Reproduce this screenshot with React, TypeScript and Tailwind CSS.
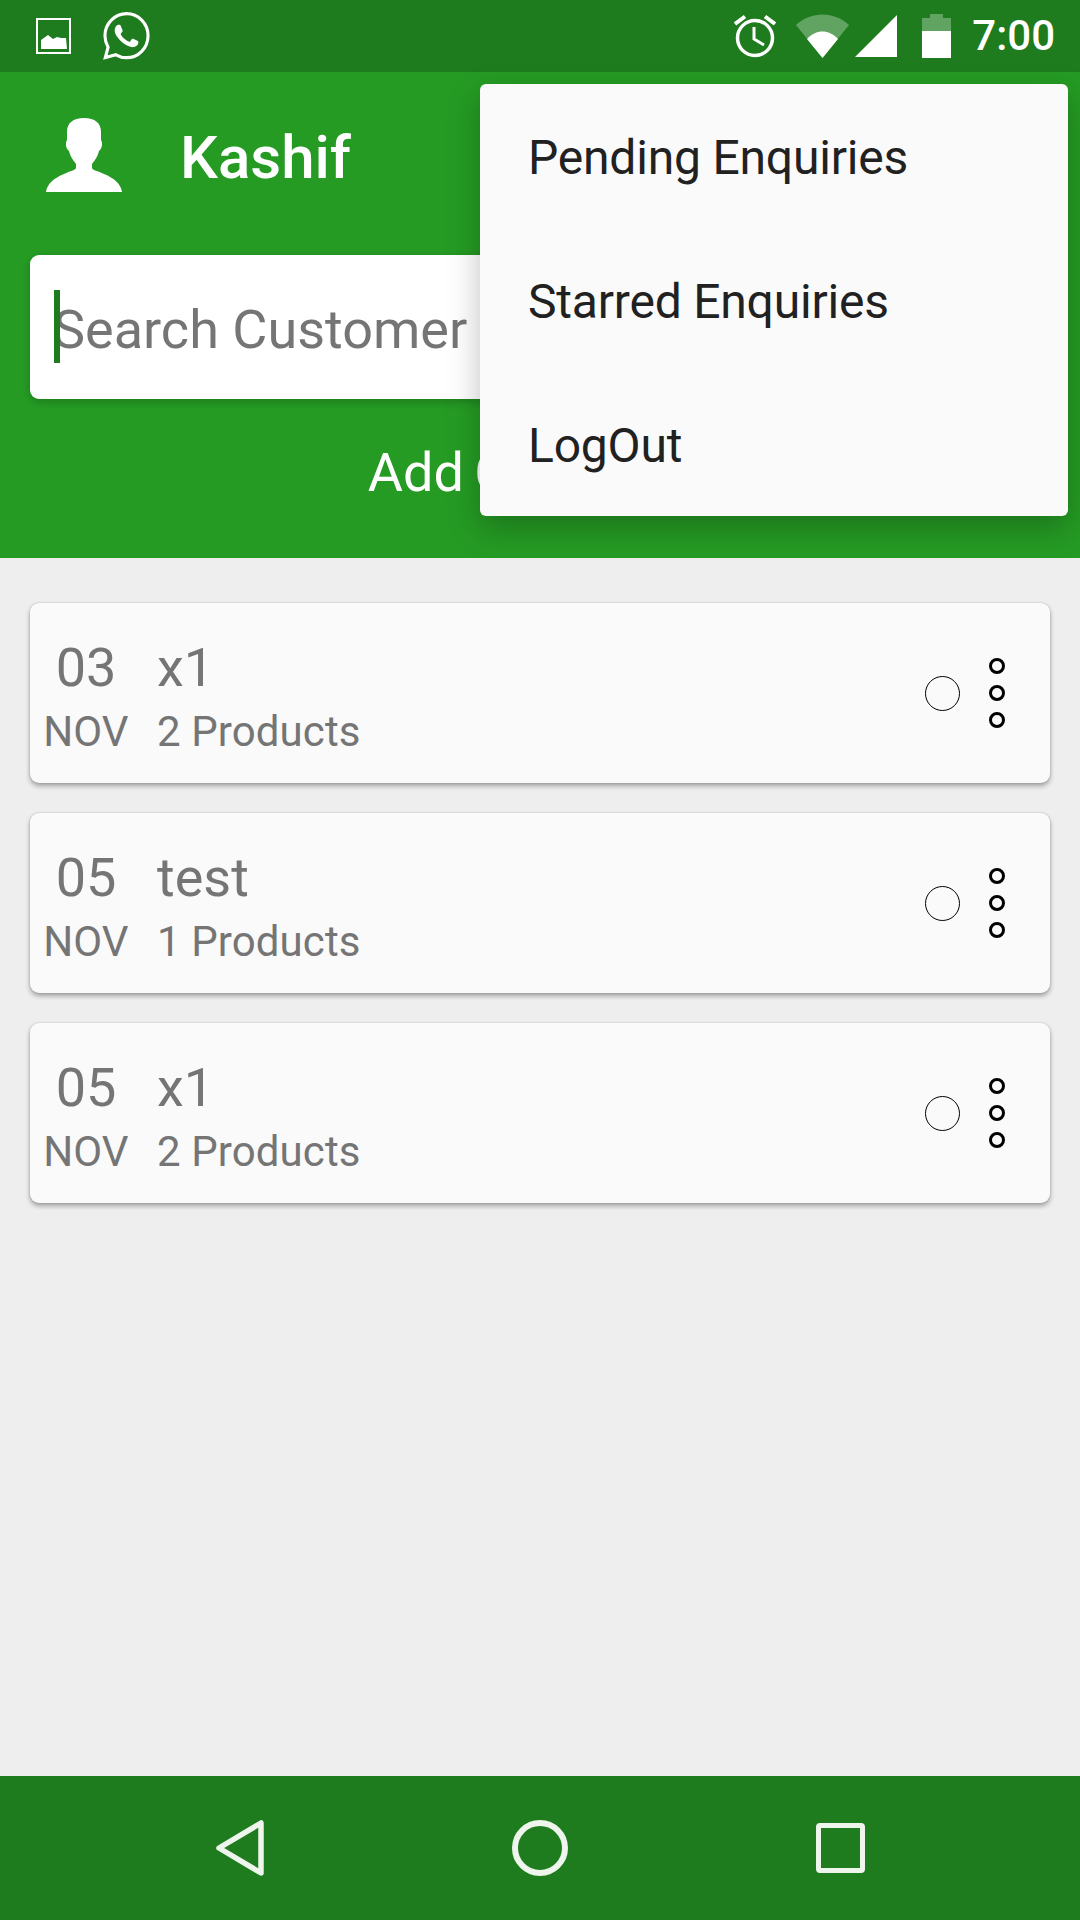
const roboto = "font-['Roboto',sans-serif]";

const enquiries = [
  { day: "03", name: "x1", products: "2 Products" },
  { day: "05", name: "test", products: "1 Products" },
  { day: "05", name: "x1", products: "2 Products" },
];

const menuItems = ["Pending Enquiries", "Starred Enquiries", "LogOut"];

const StatusBar = () => (
  <div className="flex h-[72px] shrink-0 items-center bg-[#1e7b1e] text-white">
    <svg width="36" height="36" viewBox="0 0 36 36" className="ml-[36px]" fill="none">
      <rect x="1" y="1" width="33" height="34" stroke="white" strokeWidth="2" />
      <path d="M5 22 L12 17 L17 21 L21 19 L25 20 L30 20 L31 31 L5 31 Z" fill="white" />
    </svg>
    <svg width="47" height="48" viewBox="0 0 24 24" className="ml-[31px]" fill="white" preserveAspectRatio="none">
      <path d="M17.47 14.38c-.3-.15-1.76-.87-2.03-.97-.27-.1-.47-.15-.67.15-.2.3-.77.97-.94 1.16-.17.2-.35.22-.65.07-.3-.15-1.26-.46-2.4-1.48-.89-.79-1.49-1.77-1.66-2.07-.17-.3-.02-.46.13-.61.13-.13.3-.35.45-.52.15-.17.2-.3.3-.5.1-.2.05-.37-.03-.52-.07-.15-.67-1.61-.92-2.21-.24-.58-.49-.5-.67-.51h-.57c-.2 0-.52.07-.79.37-.27.3-1.04 1.02-1.04 2.48s1.07 2.88 1.21 3.07c.15.2 2.1 3.2 5.08 4.49.71.31 1.26.49 1.69.63.71.23 1.36.19 1.87.12.57-.09 1.76-.72 2.01-1.41.25-.7.25-1.29.17-1.41-.07-.13-.27-.2-.57-.35z" />
      <path d="M12.05.85C6 .85 1 5.8 1 11.9c0 2.1.6 4 1.6 5.7L1.2 22.8l5.4-1.4a11 11 0 0 0 5.45 1.45c6 0 10.95-4.9 10.95-11C23 5.8 18.05.85 12.05.85Z" fill="none" stroke="white" strokeWidth="1.6" />
    </svg>
    <svg width="42" height="44" viewBox="0 0 42 44" className="ml-auto" fill="none" stroke="white">
      <circle cx="21" cy="24" r="17.5" strokeWidth="3.5" />
      <path d="M20 13 V25 L30 31" strokeWidth="3" />
      <path d="M1 10 L11 2.5 M41 10 L31 2.5" strokeWidth="4" />
    </svg>
    <svg width="53" height="44" viewBox="0 0 53 44" className="ml-[20px]">
      <path d="M0 11 C15 -3 38 -3 53 11 L26.5 44 Z" fill="white" fillOpacity="0.3" />
      <path d="M11 25 C20 15 33 15 42 25 L26.5 44 Z" fill="white" />
    </svg>
    <svg width="42" height="42" viewBox="0 0 42 42" className="ml-[6px]">
      <path d="M0 42 L42 0 V42 Z" fill="white" />
    </svg>
    <svg width="29" height="44" viewBox="0 0 29 44" className="ml-[25px]">
      <path d="M8 0 H21 V4 H29 V17 H0 V4 H8 Z" fill="white" fillOpacity="0.3" />
      <rect x="0" y="17" width="29" height="27" fill="white" />
    </svg>
    <span className="ml-[21px] mr-[25px] text-[42px] font-medium leading-none">7:00</span>
  </div>
);

const AppHeader = () => (
  <header className="h-[486px] shrink-0 bg-[#259b24] text-white">
    <div className="flex h-[183px] items-center">
      <svg width="76" height="74" viewBox="46 119 76 74" className="ml-[46px] mt-[-18px]" fill="white">
        <path d="M84 119 C73 119 67 124 67 133 L67 141 C65 144 66 150 69 152 C70 157 73 161 76 165 L76 169 C76 171 70 172 64 175 C54 179 47 185 46 193 L122 193 C121 185 114 179 104 175 C98 172 92 171 92 169 L92 165 C95 161 98 157 99 152 C102 150 103 144 101 141 L101 133 C101 124 95 119 84 119 Z" />
      </svg>
      <span className="ml-[58px] mt-[-12px] text-[60px] font-medium leading-none">Kashif</span>
    </div>
    <div className="relative mx-[30px] flex h-[144px] items-center rounded-[9px] bg-white pl-[23px] pt-[5px] shadow-[0_3px_8px_rgba(0,0,0,0.2)]">
      <span className="absolute left-[24px] top-[35px] h-[73px] w-[6px] bg-[#1e7b1e]" />
      <span className="text-[54px] leading-none text-[#757575]">Search Customer</span>
    </div>
    <div className="mt-[47px] pr-[3px] text-center text-[54px] leading-none [word-spacing:-3px]">Add Customer</div>
  </header>
);

const EnquiryCard = ({ day, name, products }: { day: string; name: string; products: string }) => (
  <div className="flex h-[180px] items-center rounded-[9px] bg-[#fafafa] text-[#757575] shadow-[0_3px_5px_rgba(0,0,0,0.32),0_0_2px_rgba(0,0,0,0.2)]">
    <div className="ml-[13px] w-[86px] pt-[7px] text-center">
      <div className="text-[54px] leading-[64px]">{day}</div>
      <div className="mt-[7px] text-[42px] leading-[50px] tracking-[0.1px]">NOV</div>
    </div>
    <div className="ml-[28px] pt-[7px]">
      <div className="text-[54px] leading-[64px]">{name}</div>
      <div className="mt-[7px] text-[42px] leading-[50px] tracking-[0.1px]">{products}</div>
    </div>
    <div className="ml-auto mr-[45px] flex items-center gap-[29px]">
      <span className="size-[35px] rounded-full border-[1.5px] border-black" />
      <div className="flex flex-col gap-[11px]">
        <span className="size-[16px] rounded-full border-[3.5px] border-black" />
        <span className="size-[16px] rounded-full border-[3.5px] border-black" />
        <span className="size-[16px] rounded-full border-[3.5px] border-black" />
      </div>
    </div>
  </div>
);

const NavBar = () => (
  <div className="flex h-[144px] shrink-0 items-center bg-[#1e7b1e]">
    <svg width="48" height="56" viewBox="0 0 48 56" className="ml-[216px]" fill="none" stroke="#edf5ed" strokeWidth="5.5" strokeLinejoin="round">
      <path d="M45 3 V53 L3 28 Z" />
    </svg>
    <span className="ml-[248px] size-[56px] rounded-full border-[6px] border-[#edf5ed]" />
    <span className="ml-[248px] h-[50px] w-[49px] rounded-[4px] border-[5px] border-[#edf5ed]" />
  </div>
);

export default function App() {
  return (
    <div className={`relative flex h-[1920px] w-[1080px] flex-col overflow-hidden bg-[#eeeeee] ${roboto}`}>
      <StatusBar />
      <AppHeader />
      <main className="flex flex-1 flex-col gap-[30px] px-[30px] pt-[45px]">
        {enquiries.map((enquiry, index) => (
          <EnquiryCard key={index} {...enquiry} />
        ))}
      </main>
      <NavBar />
      <div className="absolute left-[480px] top-[84px] w-[588px] rounded-[6px] bg-[#fafafa] text-[48px] tracking-[-0.2px] text-[#212121] shadow-[0_12px_32px_rgba(0,0,0,0.25)]">
        {menuItems.map((item) => (
          <div key={item} className="flex h-[144px] items-center pl-[48px] pt-[3px]">
            {item}
          </div>
        ))}
      </div>
    </div>
  );
}
